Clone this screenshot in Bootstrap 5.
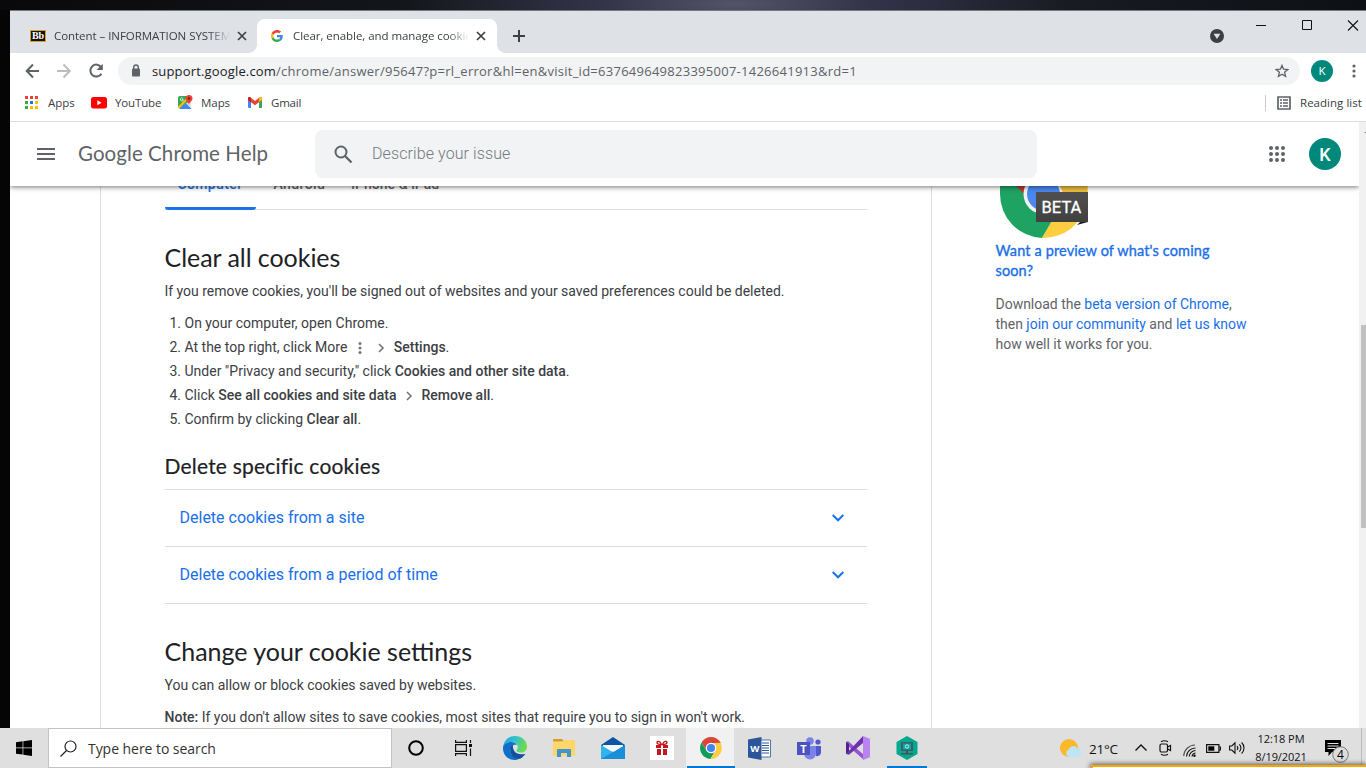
<!DOCTYPE html>
<html lang="en">
<head>
<meta charset="utf-8">
<title>Google Chrome Help</title>
<link href="https://cdn.jsdelivr.net/npm/bootstrap@5.3.0/dist/css/bootstrap.min.css" rel="stylesheet">
<style>
html,body{height:768px;overflow:hidden}
body{background:#050506;font-family:"Roboto",sans-serif;font-size:14px;line-height:20px;color:#3c4043}
svg{display:block;flex:none}
a{text-decoration:none;color:#1a6fe8}
.wall{height:10px;flex:none;background:radial-gradient(330px 60px at 735px 4px,#55536a 0,#33344a 40%,transparent 100%),linear-gradient(90deg,#09090b 0,#15161a 30%,#1b1c24 75%,#0e1015 100%)}
.browser-win{margin-left:10px;border-top:1px solid #77787b;background:#fff;min-height:0}
.segoe{font-family:"Open Sans",sans-serif;font-size:11.5px;letter-spacing:-.05px;color:#3c4043;white-space:nowrap}
.tabstrip{height:42px;background:#dee1e6;padding-left:8px;padding-top:8px}
.tab-item{height:34px;width:239px;padding:0 10px 0 12px}
.tab-item.current{background:#fff;border-radius:8px 8px 0 0;width:240px;position:relative;padding-right:11px}
.tab-item.current::before,.tab-item.current::after{content:"";position:absolute;bottom:0;width:8px;height:8px}
.tab-item.current::before{left:-8px;background:radial-gradient(circle at 0 0,transparent 7.5px,#fff 8px)}
.tab-item.current::after{right:-8px;background:radial-gradient(circle at 100% 0,transparent 7.5px,#fff 8px)}
.tab-title{flex:1;overflow:hidden;-webkit-mask-image:linear-gradient(90deg,#000 88%,transparent);margin-right:7px}
.toolbar{height:36px;flex:none}
.omni{height:28px;border-radius:14px;background:#f1f3f4;width:1182px;padding:0 11px 0 10px}
.url{font-size:13px;color:#5f6368;letter-spacing:.263px}
.url b{font-weight:400;color:#202124;letter-spacing:.16px}
.bookmarks{height:33px;flex:none;border-bottom:1px solid #dadce0;padding-bottom:5px}
.help-head{height:64px;flex:none;background:#fff;box-shadow:0 1px 5px rgba(0,0,0,.55);position:relative;z-index:2;width:1349px}
.gsans{font-family:"Lato",sans-serif;color:#202124;font-weight:400;margin:0;white-space:nowrap}
.search-help{width:722px;height:48px;border-radius:8px;background:#f1f3f4;color:#74797e;font-size:16px;font-weight:300}
.avatar{background:#00897b;color:#fff;border-radius:50%;display:flex;align-items:center;justify-content:center;flex:none}
.article-box{width:832px;margin-left:90px;border:solid #dadce0;border-width:0 1px;padding:0 64px 0 63.5px}
.os-tabs{height:24px;border-bottom:1px solid #dadce0}
.os-tabs span{margin-top:-12px;font-weight:500;font-size:14px;color:#5f6368;letter-spacing:.4px;white-space:nowrap}
.os-tabs .sel{color:#1a73e8;width:91px;height:36px;border-bottom:3px solid #1a73e8;border-bottom-left-radius:3px;border-bottom-right-radius:3px;text-align:center}
.h-lg{font-size:25px;line-height:32px;letter-spacing:-.05px}
.steps{padding-left:20px;margin:10px 0 0;line-height:24px}
.steps b,b{font-weight:500}
.steps svg{display:inline-block;vertical-align:middle}
.fold{height:57px;border-bottom:1px solid #dadce0;padding:0 23px 0 15px;font-size:16px}
.aside-col{margin-left:63.5px;width:270px;color:#5f6368}
.vscroll{width:7px;background:#f1f1f1}
.vthumb{height:203px;margin:203px 0 0 2px;background:#c1c1c1}
.taskbar{height:40px;flex:none;background:#dfdfdf;color:#000;position:relative}
.task-search{width:344px;height:40px;background:#fff;border:1px solid #c3c3c3;font-size:14px;color:#222}
.tk{width:49px;height:40px;display:flex;align-items:center;justify-content:center;flex:none}
.tk.run{background:linear-gradient(#0078d7,#0078d7) bottom/40px 2px no-repeat}
.tk.act{background:linear-gradient(#0078d7,#0078d7) bottom/48px 2px no-repeat,linear-gradient(#f1f1f1,#f1f1f1) 0 0/48px 40px no-repeat}
.ty{width:24px;display:flex;justify-content:center}
.toast-edge{position:absolute;left:1091px;right:0;bottom:0;height:3px;background:#fff;border-top:2px solid #ffa400;border-left:2px solid #ffa400;box-shadow:0 0 5px 1px rgba(0,0,0,.65)}
</style>
</head>
<body class="d-flex flex-column">
<div class="wall"></div>
<div class="browser-win d-flex flex-column flex-grow-1">
  <div class="tabstrip d-flex flex-none">
    <div class="tab-item d-flex align-items-center">
      <svg width="16" height="12" viewBox="0 0 16 12"><rect x=".5" y=".5" width="15" height="11" fill="#111" stroke="#d9a514"/><text x="8" y="9.3" text-anchor="middle" font-family="Liberation Serif" font-weight="700" font-size="10" fill="#fff">Bb</text></svg>
      <div class="tab-title segoe ms-2"><span>Content – INFORMATION SYSTEM</span></div>
      <svg width="10" height="10" viewBox="0 0 10 10" stroke="#3c4043" stroke-width="1.7"><path d="M1 1l8 8M9 1L1 9"/></svg>
    </div>
    <div class="tab-item current d-flex align-items-center">
      <svg width="16" height="12" viewBox="-8 0 64 48"><path fill="#EA4335" d="M24 9.5c3.54 0 6.71 1.22 9.21 3.6l6.85-6.85C35.9 2.38 30.47 0 24 0 14.62 0 6.51 5.38 2.56 13.22l7.98 6.19C12.43 13.72 17.74 9.5 24 9.5z"/><path fill="#4285F4" d="M46.98 24.55c0-1.57-.15-3.09-.38-4.55H24v9.02h12.94c-.58 2.96-2.26 5.48-4.78 7.18l7.73 6c4.51-4.18 7.09-10.36 7.09-17.65z"/><path fill="#FBBC05" d="M10.53 28.59c-.48-1.45-.76-2.99-.76-4.59s.27-3.14.76-4.59l-7.98-6.19C.92 16.46 0 20.12 0 24c0 3.88.92 7.54 2.56 10.78l7.97-6.19z"/><path fill="#34A853" d="M24 48c6.480 0 11.930-2.130 15.890-5.810l-7.730-6c-2.150 1.450-4.920 2.300-8.160 2.300-6.260 0-11.570-4.220-13.470-9.910l-7.980 6.190C6.510 42.620 14.620 48 24 48z"/></svg>
      <div class="tab-title segoe ms-2">Clear, enable, and manage cookies</div>
      <svg width="10" height="10" viewBox="0 0 10 10" stroke="#3c4043" stroke-width="1.7"><path d="M1 1l8 8M9 1L1 9"/></svg>
    </div>
    <svg class="ms-3" width="12" height="34" viewBox="0 0 12 34" stroke="#3c4043" stroke-width="2"><path d="M0 17h12M6 11v12"/></svg>
    <div class="d-flex ms-auto">
      <svg width="14" height="34" viewBox="0 0 14 34"><circle cx="7" cy="17" r="7" fill="#3c4043"/><path d="M3.600 14.800h6.800L7 20z" fill="#dee1e6"/></svg>
      <svg style="margin-left:32px" width="110" height="34" viewBox="0 0 110 34" fill="none" stroke="#111"><path d="M0 6.500h10M46.500 1.500h9v9h-9z"/><path d="M92 1.500l10 10M102 1.500l-10 10" stroke-width="1.100"/></svg>
    </div>
  </div>
  <div class="toolbar d-flex align-items-center">
    <svg style="margin-left:15px" width="80" height="16" viewBox="0 0 80 16" fill="none" stroke="#5f6368" stroke-width="2"><path d="M14 8H1M8 1.500L1.700 8 8 14.500"/><path d="M32 8h13M38.500 1.500L44.800 8l-6.300 6.500" stroke="#bdbdbd"/><path d="M76.300 4.200A6 6 0 1 0 76.500 10.700"/><path d="M77.800 .8v6.300h-6.300z" fill="#5f6368" stroke="none"/></svg>
    <div class="omni d-flex align-items-center" style="margin-left:13px">
      <svg width="16" height="14" viewBox="0 0 16 14"><rect x="4" y="4.500" width="8" height="8" rx="1" fill="#5f6368"/><path d="M5.700 5V3.300a2.300 2.300 0 0 1 4.600 0V5" fill="none" stroke="#5f6368" stroke-width="1.400"/></svg>
      <span class="segoe url ms-2"><b>support.google.com</b>/chrome/answer/95647?p=rl_error&amp;hl=en&amp;visit_id=637649649823395007-1426641913&amp;rd=1</span>
      <svg class="ms-auto" width="14" height="14" viewBox="0 0 14 14" fill="none" stroke="#5f6368" stroke-width="1.300"><path d="M7 1.400l1.600 3.800 4.200.4-3.200 2.700 1 4.100L7 10.200l-3.600 2.200 1-4.100L1.200 5.600l4.200-.4z"/></svg>
    </div>
    <div class="avatar segoe text-white" style="width:22px;height:22px;margin-left:11px">K</div>
    <svg style="margin-left:19px" width="4" height="14" viewBox="0 0 4 14" fill="#5f6368"><circle cx="2" cy="2" r="1.600"/><circle cx="2" cy="7" r="1.600"/><circle cx="2" cy="12" r="1.600"/></svg>
  </div>
  <div class="bookmarks d-flex align-items-center segoe">
    <svg style="margin-left:15px" width="13" height="13" viewBox="0 0 13 13"><path fill="#ea4335" d="M0 0h3v3H0zM5 0h3v3H5zM10 0h3v3h-3z"/><path fill="#34a853" d="M0 5h3v3H0zM0 10h3v3H0z"/><path fill="#1a73e8" d="M5 5h3v3H5z"/><path fill="#fbbc04" d="M10 5h3v3h-3zM5 10h3v3H5zM10 10h3v3h-3z"/></svg>
    <span style="margin-left:10px;width:27px">Apps</span>
    <svg class="ms-3" width="16" height="12" viewBox="0 0 16 12"><rect width="16" height="11.500" rx="2.500" fill="#f00"/><path d="M6.300 3.300v5L10.600 5.800z" fill="#fff"/></svg>
    <span style="margin-left:8px;width:46px;letter-spacing:-.15px">YouTube</span>
    <svg style="margin-left:17px" width="15" height="15" viewBox="0 0 15 15"><path d="M0 3a2 2 0 0 1 2-2h9v12H2a2 2 0 0 1-2-2z" fill="#34a853"/><path d="M1 13.500L7 8l6.500 5.500a2 2 0 0 1-1 .5H2z" fill="#4285f4"/><path d="M13 6v7L8 8.500z" fill="#dfe3e6"/><path d="M0 11.500L9.500 2l1.500 1.500L1.500 13.500z" fill="#fbbc04"/><path d="M4.800 3.300a1.500 1.500 0 1 0 .5 1.400H4" fill="none" stroke="#fff" stroke-width=".8"/><path d="M11 0a3.500 3.500 0 0 0-3.500 3.500C7.500 6 11 7 11 10.500 11 7 14.500 6 14.500 3.500A3.500 3.500 0 0 0 11 0z" fill="#ea4335"/><circle cx="11" cy="3.500" r="1.200" fill="#8c1a12"/></svg>
    <span style="margin-left:8px;width:29px">Maps</span>
    <svg style="margin-left:18px" width="14" height="11" viewBox="0 0 14 11"><path d="M0 1.500h3V11H1a1 1 0 0 1-1-1z" fill="#4285f4"/><path d="M11 1.500h3V10a1 1 0 0 1-1 1h-2z" fill="#34a853"/><path d="M0 1.500C0 0 1.500-.4 2.600.5L7 4 11.400.5C12.500-.4 14 0 14 1.500V3L7 8.300 0 3z" fill="#ea4335"/><path d="M11 .8C12.300-.5 14 0 14 1.500V3l-3 2.300z" fill="#fbbc04"/><path d="M0 1.500C0 0 1.700-.5 3 .8v4.500L0 3z" fill="#c5221f"/></svg>
    <span style="margin-left:9px;width:30px;letter-spacing:-.2px">Gmail</span>
    <div class="ms-auto" style="height:16px;border-left:1px solid #c8cacd"></div>
    <svg style="margin-left:11px" width="14" height="14" viewBox="0 0 14 14"><path d="M1 1h12v12H1z" fill="none" stroke="#5f6368" stroke-width="1.700"/><path d="M3 3.300h2v1.500H3zM6 3.300h5v1.500H6zM3 6.300h2v1.500H3zM6 6.300h5v1.500H6zM3 9.300h2v1.500H3zM6 9.300h5v1.500H6z" fill="#5f6368"/></svg>
    <span style="margin-left:9px;width:66px;letter-spacing:.03px">Reading list</span>
  </div>
  <div class="d-flex flex-grow-1" style="min-height:0">
    <div class="d-flex flex-column overflow-hidden" style="width:1349px">
      <header class="help-head d-flex align-items-center">
        <svg style="margin-left:27px" width="18" height="12" viewBox="0 0 18 12" fill="#5f6368"><path d="M0 0h18v2H0zM0 5h18v2H0zM0 10h18v2H0z"/></svg>
        <h1 class="gsans" style="font-size:20.5px;letter-spacing:.07px;color:#5f6368;margin-left:23px;width:237px;padding-bottom:1px">Google Chrome Help</h1>
        <div class="search-help d-flex align-items-center">
          <svg style="margin-left:19px" width="19" height="19" viewBox="0 0 19 19" fill="none" stroke="#5f6368" stroke-width="2"><circle cx="7" cy="7" r="5.500"/><path d="M11 11l6.500 6.500" stroke-width="2.300"/></svg>
          <span style="margin-left:19px;letter-spacing:.1px">Describe your issue</span>
        </div>
        <svg style="margin-left:232px" width="16" height="16" viewBox="0 0 16 16" fill="#5f6368"><g id="dots"><circle cx="2" cy="2" r="2"/><circle cx="8" cy="2" r="2"/><circle cx="14" cy="2" r="2"/></g><use href="#dots" y="6"/><use href="#dots" y="12"/></svg>
        <div class="avatar" style="width:32px;height:32px;margin-left:24px;font-size:18px;font-weight:500;padding-top:1px">K</div>
      </header>
      <div class="d-flex flex-grow-1">
        <main class="article-box">
          <div class="os-tabs d-flex">
            <span class="sel">Computer</span>
            <span style="margin-left:18px">Android</span>
            <span style="margin-left:26px;letter-spacing:.05px">iPhone &amp; iPad</span>
          </div>
          <h2 class="gsans h-lg" style="margin-top:31px">Clear all cookies</h2>
          <p class="mb-0" style="margin-top:8px;letter-spacing:-.012px">If you remove cookies, you'll be signed out of websites and your saved preferences could be deleted.</p>
          <ol class="steps">
            <li>On your computer, open Chrome.</li>
            <li>At the top right, click More <svg width="18" height="18" viewBox="0 0 18 18" fill="#757575"><circle cx="9" cy="4.500" r="1.500"/><circle cx="9" cy="9" r="1.500"/><circle cx="9" cy="13.500" r="1.500"/></svg> <svg width="18" height="18" viewBox="0 0 18 18" fill="none" stroke="#757575" stroke-width="1.600"><path d="M7 5l4 4-4 4"/></svg> <b>Settings</b>.</li>
            <li>Under "Privacy and security," click <b>Cookies and other site data</b>.</li>
            <li>Click <b>See all cookies and site data</b> <svg width="18" height="18" viewBox="0 0 18 18" fill="none" stroke="#757575" stroke-width="1.600"><path d="M7 5l4 4-4 4"/></svg> <b>Remove all</b>.</li>
            <li>Confirm by clicking <b>Clear all</b>.</li>
          </ol>
          <h3 class="gsans" style="font-size:21px;letter-spacing:.2px;line-height:28px;margin-top:21px;padding-bottom:9px;border-bottom:1px solid #dadce0;-webkit-text-stroke:.2px">Delete specific cookies</h3>
          <div class="fold d-flex align-items-center"><a href="#">Delete cookies from a site</a><svg class="ms-auto" width="12" height="8" viewBox="0 0 12 8" fill="none" stroke="#1a73e8" stroke-width="2"><path d="M.7 1L6 6.300 11.300 1"/></svg></div>
          <div class="fold d-flex align-items-center"><a href="#">Delete cookies from a period of time</a><svg class="ms-auto" width="12" height="8" viewBox="0 0 12 8" fill="none" stroke="#1a73e8" stroke-width="2"><path d="M.7 1L6 6.300 11.300 1"/></svg></div>
          <h2 class="gsans h-lg" style="margin-top:31px;letter-spacing:-.01px;font-feature-settings:'liga'">Change your cookie settings</h2>
          <p class="mb-0" style="margin-top:8px;letter-spacing:-.015px">You can allow or block cookies saved by websites.</p>
          <p class="mb-0" style="margin-top:12px"><b>Note:</b> If you don't allow sites to save cookies, most sites that require you to sign in won't work.</p>
        </main>
        <aside class="aside-col">
          <svg style="margin-left:4.500px" width="90" height="53" viewBox="1000 186 90 53"><defs><linearGradient id="bg" x1="0" y1="0" x2="0" y2="1"><stop offset="0" stop-color="#505050"/><stop offset="1" stop-color="#404040"/></linearGradient></defs>
            <path d="M1000 186v8a44 44 0 0 0 42 44l16-26-24-26z" fill="#1ea362"/><path d="M1016 186h12v12z" fill="#b83a2d"/><circle cx="1043.500" cy="194" r="20" fill="#f1f1f1"/><path d="M1060 186h27.500v8a44 44 0 0 1-45.500 44l16-28c6-6 6-17 2-24z" fill="#ffcd40"/><circle cx="1043.500" cy="194" r="16.500" fill="#4a87ee"/><path d="M1060 186h27.500v6H1063z" fill="#eabb3d"/><path d="M1080 222h8l-11 3z" fill="#222"/><rect x="1036" y="192" width="52" height="30" fill="url(#bg)"/><text x="1061.500" y="213" text-anchor="middle" font-family="Roboto" font-size="16.500" fill="#fff" stroke="#fff" stroke-width=".3">BETA</text></svg>
          <div class="gsans" style="color:#1a6fe8;-webkit-text-stroke:.35px;margin-top:2px;font-size:14.5px;letter-spacing:.13px">Want a preview of what's coming<br>soon?</div>
          <p class="mb-0" style="margin-top:13px;letter-spacing:-.016px">Download the <a href="#">beta version of Chrome</a>,<br>then <a href="#">join our community</a> and <a href="#">let us know</a><br>how well it works for you.</p>
        </aside>
      </div>
    </div>
    <div class="vscroll position-relative overflow-hidden"><svg class="position-absolute" style="left:5px;top:9px" width="4" height="4"><path d="M4 0v2H0z" fill="#505050"/></svg><div class="vthumb"></div></div>
  </div>
</div>
<footer class="taskbar d-flex align-items-center">
  <svg style="margin:0 16px" width="16" height="16" viewBox="0 0 16 16"><path d="M0 2.200L6.600 1.300V7.600H0zM7.300 1.200L16 0v7.600H7.300zM0 8.300h6.600v6.300L0 13.700zM7.300 8.300H16V16l-8.700-1.200z"/></svg>
  <div class="task-search d-flex align-items-center">
    <svg style="margin-left:11px" width="17" height="17" viewBox="0 0 17 17" fill="none" stroke="#222" stroke-width="1.200"><circle cx="10.500" cy="6.500" r="5.500"/><path d="M6.500 10.500L.5 16.500"/></svg>
    <span class="segoe" style="font-size:14px;margin-left:11px;color:#333;padding-top:1px">Type here to search</span>
  </div>
  <div class="tk"><svg class="me-1" width="16" height="16" viewBox="0 0 16 16" style="margin-left:2px"><circle cx="8" cy="8" r="6.800" fill="none" stroke="#000" stroke-width="2"/></svg></div>
  <div class="tk"><svg class="me-1" width="18" height="16" viewBox="0 0 18 16" fill="none" stroke="#111" stroke-width="1.200"><path d="M.6 4.600h10.800v6.800H.6zM.6 0v2.400h10.800V0M.6 16v-2.400h10.800V16M15.500 0v3M15.500 8.500V16"/><path d="M14 4h3v3h-3z" fill="#111" stroke="none"/></svg></div>
  <div class="tk"><svg width="24" height="24" viewBox="0 0 24 24"><defs><linearGradient id="e1" x1="0" y1="0" x2="1" y2=".3"><stop offset="0" stop-color="#1f9fdf"/><stop offset=".5" stop-color="#2fc1d0"/><stop offset="1" stop-color="#6bdc50"/></linearGradient></defs><path d="M0 11C1 4 6 0 12 0c7 0 12 5 12 10.500 0 4-3 6-6 6s-4.500-1-4.500-2c0-.8 1.300-1.200 1.300-3.500C14.800 8 12 6 8 6c-4 0-7 2.500-8 5z" fill="url(#e1)"/><path d="M0 12c0-3.500 4-6 8-6 2.500 0 5 1 6 3-3-1-6.500 1-6.500 5.500 0 4 3.500 8 8 8.500-1 .6-2.500 1-4 1C5 24 0 19 0 12z" fill="#0f6fc9"/><path d="M7.300 13c0-2 1.200-3.500 2.700-4-1 6 4 11 12.400 8.700C20.600 20.700 18 23 15 23c-4.500 0-8-5-7.700-10z" fill="#11509c"/></svg></div>
  <div class="tk"><svg width="22" height="18" viewBox="0 0 22 18"><path d="M0 1a1 1 0 0 1 1-1h8l2 2.500H0z" fill="#d89c1c"/><path d="M0 3h9.500l1.500-2h10a1 1 0 0 1 1 1v15H0z" fill="#ffd667"/><path d="M4 18v-7a1 1 0 0 1 1-1h12a1 1 0 0 1 1 1v7h-4v-4H8v4z" fill="#3f94d1"/></svg></div>
  <div class="tk"><svg width="24" height="22" viewBox="0 0 24 22"><path d="M0 8L12 0l12 8-2 5H2z" fill="#0a56a5"/><path d="M2 8h20v6H2z" fill="#fff"/><path d="M0 8l15 9 9-9v14H0z" fill="#31b3ee"/><path d="M24 8L0 22h24z" fill="#1a8fd8"/><path d="M2 8h20l-9 6.500z" fill="#f4f8fb"/></svg></div>
  <div class="tk"><svg width="24" height="24" viewBox="0 0 24 24"><path d="M0 0h24v24H0z" fill="#fff"/><path d="M6 9h5v3H6zM13 9h5v3h-5zM7 13h4v6H7zM13 13h4v6h-4z" fill="#c4161c"/><path d="M11.500 8.500C9 8.500 7 8 7 6.500s3-2 4.500 2zM12.500 8.500C15 8.500 17 8 17 6.500s-3-2-4.500 2z" fill="none" stroke="#c4161c" stroke-width="1.300"/></svg></div>
  <div class="tk act"><svg width="22" height="22" viewBox="0 0 22 22"><path d="M1.500 5.500a11 11 0 0 1 19 0L21 6H11l-4.500 7.500z" fill="#db4437"/><path d="M1.500 5.500A11 11 0 0 0 10.500 22l4.700-8.500H6.300z" fill="#0f9d58"/><path d="M20.500 5.800A11 11 0 0 1 10.500 22l5-8.500L14 6z" fill="#ffcd40"/><circle cx="11" cy="11" r="5.300" fill="#fff"/><circle cx="11" cy="11" r="4.100" fill="#4285f4"/></svg></div>
  <div class="tk"><svg width="23" height="23" viewBox="0 0 23 23"><path d="M12 3h10.500v17H12z" fill="#fff" stroke="#2b579a" stroke-width=".8"/><path d="M14 6h7M14 8.500h7M14 11h7M14 13.500h7M14 16h7" stroke="#2b579a"/><path d="M0 2.500L13.500 0v23L0 20.500z" fill="#2b579a"/><text x="6.800" y="15" text-anchor="middle" font-family="Open Sans" font-weight="700" font-size="9.500" fill="#fff">W</text></svg></div>
  <div class="tk"><svg width="24" height="23" viewBox="0 0 24 23"><circle cx="13" cy="4" r="3.800" fill="#7b83eb"/><circle cx="21" cy="5" r="2.600" fill="#5059c9"/><path d="M17 9h7v6.500a4 4 0 0 1-5 3.500z" fill="#5059c9"/><path d="M7 9h12v7.500a6 6 0 0 1-12 0z" fill="#7b83eb"/><path d="M0 5h13v13H0z" fill="#4b53bc"/><text x="6.500" y="15.500" text-anchor="middle" font-family="Open Sans" font-weight="700" font-size="11" fill="#fff">T</text></svg></div>
  <div class="tk"><svg width="24" height="24" viewBox="0 0 24 24"><path d="M0 6l2-1 16 14v5L1 9z" fill="#9455d5"/><path d="M0 6l3 2v8l-3 2z" fill="#52218a"/><path d="M0 18L17 0v7L3 18.800z" fill="#6d33ab"/><path d="M17 0l7 2.800v18.400L17 24z" fill="#bb83f2"/></svg></div>
  <div class="tk run"><svg width="22" height="24" viewBox="0 0 22 24"><path d="M11 0l10.500 6v12L11 24 .5 18V6z" fill="#00a88e"/><path d="M5 6h12v9H5z" fill="#455a64"/><path d="M7 7.500h8v6H7z" fill="#00a9a5"/><circle cx="11" cy="10.500" r="1.700" fill="none" stroke="#b7f5e7"/><path d="M10 15h2v2.500h-2zM5 17h12v1.500H5z" fill="#49525b"/></svg></div>
  <div class="d-flex align-items-center ms-auto">
    <svg width="24" height="24" viewBox="0 0 24 24"><circle cx="11" cy="12" r="9" fill="#fbb829"/><path d="M11 21a4 4 0 0 1-.5-7.500 5 5 0 0 1 9-1 4.300 4.300 0 0 1 0 8.500z" fill="#bfe3fa"/></svg>
    <span class="segoe" style="font-size:13.5px;letter-spacing:-.2px;margin-left:7px;width:29px;color:#111;padding-top:1px">21°C</span>
    <div class="ty" style="margin-left:11px"><svg width="12" height="8" viewBox="0 0 12 8" fill="none" stroke="#111" stroke-width="1.400"><path d="M.5 6.500L6 1l5.500 5.500"/></svg></div>
    <div class="ty"><svg width="14" height="16" viewBox="0 0 14 16" fill="none" stroke="#111" stroke-width="1.200"><rect x="2" y="4" width="7.500" height="8" rx="1.500"/><path d="M9.500 7l3-1.500v5l-3-1.500M3 1.800C5 .6 8 .6 10 1.800M3 14.200c2 1.200 5 1.200 7 0"/></svg></div>
    <div class="ty pt-1"><svg width="13" height="13" viewBox="0 0 13 13" fill="none" stroke="#555" stroke-width="1.100"><path d="M.7 12A11.500 11.500 0 0 1 12 1"/><path d="M3.500 12.500A9 9 0 0 1 12.500 4M6.200 12.500A6.500 6.500 0 0 1 12.500 6.500M9 12.500a4 4 0 0 1 3.500-3.500" stroke="#111"/><circle cx="11.500" cy="11.700" r="1.200" fill="#111" stroke="none"/></svg></div>
    <div class="ty"><svg width="15" height="9" viewBox="0 0 15 9"><path d="M.6.6h12.300v7.800H.6zM13 3h1.500v3H13" fill="none" stroke="#111" stroke-width="1.200"/><path d="M2.300 2.300h6v4.400h-6z"/></svg></div>
    <div class="ty"><svg width="16" height="14" viewBox="0 0 16 14" fill="none" stroke="#111" stroke-width="1.100"><path d="M.6 5h2.200L6 1.800v10.400L2.800 9H.6zM8 5a3 3 0 0 1 0 4M10.300 3.300a5 5 0 0 1 0 7.400M12.600 1.500a7.500 7.500 0 0 1 0 11"/></svg></div>
    <div class="segoe text-center" style="width:64px;font-size:11px;line-height:18px;color:#111;margin-top:-1px">12:18 PM<br>8/19/2021</div>
    <svg style="margin-left:11px" width="37" height="30" viewBox="0 0 37 30"><path d="M1 7h16v12H8l-3.500 4v-4H1z"/><path d="M3.500 10.500h11M3.500 13h11M3.500 15.500h8" stroke="#dfdfdf"/><circle cx="16.500" cy="21.500" r="7.800" fill="#dcdcdc" stroke="#777"/><text x="16.500" y="26" text-anchor="middle" font-family="Open Sans" font-size="12" fill="#000">4</text></svg>
    <div style="width:5px;height:40px;border-left:1px solid #bbb"></div>
  </div>
  <div class="toast-edge"></div>
</footer>
<script src="https://cdn.jsdelivr.net/npm/bootstrap@5.3.0/dist/js/bootstrap.bundle.min.js"></script>
</body>
</html>
